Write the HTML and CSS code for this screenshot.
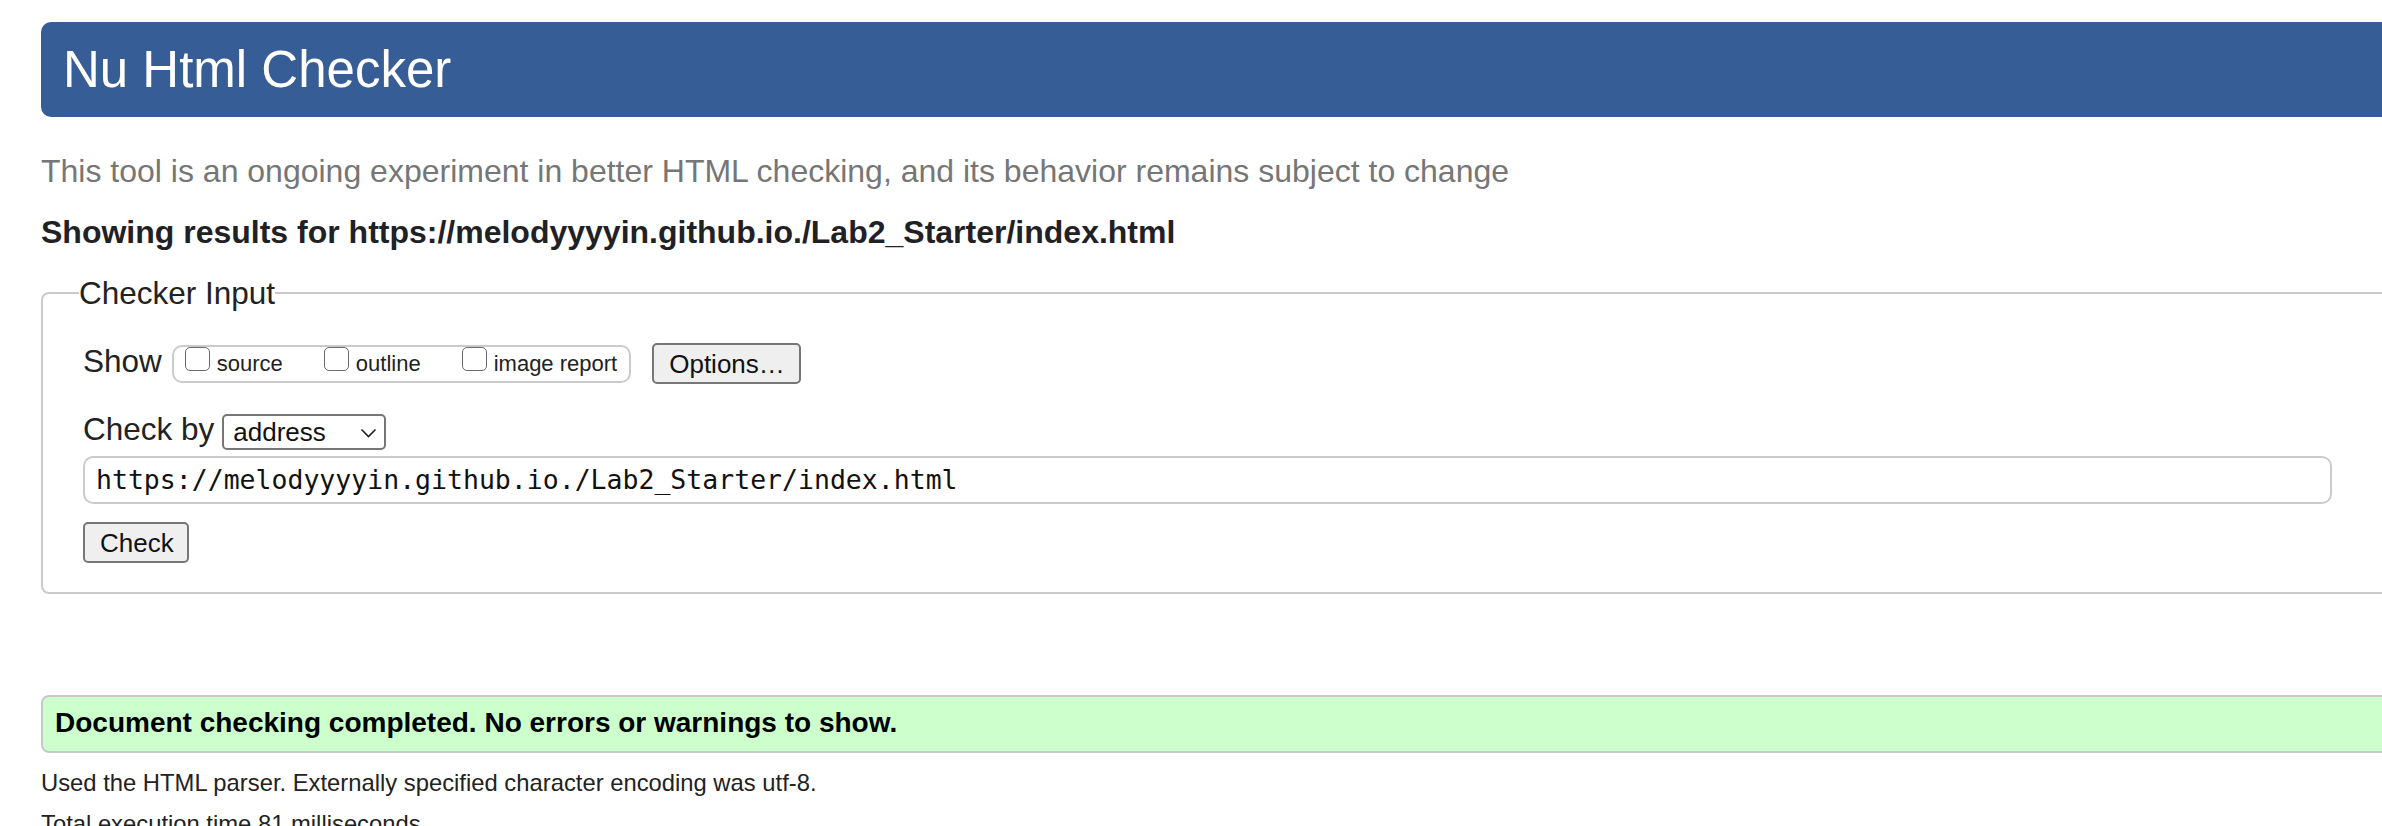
FILE: index.html
```html
<!DOCTYPE html>
<html lang="en">
<head>
<meta charset="utf-8">
<title>Nu Html Checker</title>
<link rel="stylesheet" href="styles.css">
</head>
<body>
<div class="page">
  <h1 class="title">Nu Html Checker</h1>
  <p class="lead">This tool is an ongoing experiment in better HTML checking, and its behavior remains subject to change</p>
  <p class="showing">Showing results for https://melodyyyyin.github.io./Lab2_Starter/index.html</p>
  <form class="checker">
    <fieldset class="input-set">
      <legend class="input-legend">Checker Input</legend>
      <div class="row show-row">
        <span class="row-label">Show</span>
        <div class="opts">
          <label class="opt"><input type="checkbox" class="cb"><span class="opt-text">source</span></label>
          <label class="opt"><input type="checkbox" class="cb"><span class="opt-text">outline</span></label>
          <label class="opt"><input type="checkbox" class="cb"><span class="opt-text">image report</span></label>
        </div>
        <button type="button" class="btn btn-options">Options…</button>
      </div>
      <div class="row by-row">
        <span class="row-label">Check by</span>
        <div class="select">
          <span class="select-text">address</span>
          <svg class="chev" width="17" height="10" viewBox="0 0 17 10"><path d="M1.5 1.5 L8.5 8.5 L15.5 1.5" fill="none" stroke="#222" stroke-width="1.6"/></svg>
        </div>
      </div>
      <div class="url">https://melodyyyyin.github.io./Lab2_Starter/index.html</div>
      <button type="button" class="btn btn-check">Check</button>
    </fieldset>
  </form>
  <div class="success">Document checking completed. No errors or warnings to show.</div>
  <p class="details first">Used the HTML parser. Externally specified character encoding was utf-8.</p>
  <p class="details">Total execution time 81 milliseconds.</p>
</div>
</body>
</html>
```

FILE: styles.css
```css
html, body {
  margin: 0;
  padding: 0;
  background: #ffffff;
}
body {
  overflow: hidden;
  font-family: "Liberation Sans", Arial, sans-serif;
  color: #222222;
}
.page {
  padding: 22px 0 0 41px;
  width: 2420px;
}
.title {
  margin: 0;
  padding: 19px 22px 18px 22px;
  font-size: 51px;
  line-height: 58px;
  font-weight: normal;
  color: #ffffff;
  background: #365d95;
  border-radius: 10px 0 0 10px;
}
.lead {
  margin: 36px 0 0 0;
  font-size: 32px;
  line-height: 36px;
  color: #767676;
}
.showing {
  margin: 25px 0 0 0;
  font-size: 32px;
  line-height: 36px;
  font-weight: bold;
  color: #1f2125;
}
.checker {
  margin: 26px 0 0 0;
}
.input-set {
  margin: 0;
  padding: 33px 40px 29px 40px;
  border: 2px solid #cbcbcb;
  border-radius: 8px;
  min-width: 0;
}
.input-legend {
  padding: 0;
  margin-left: -4px;
  font-size: 31.5px;
  line-height: 34px;
  color: #222222;
}
.row {
  display: flex;
  align-items: flex-start;
}
.row-label {
  font-size: 31.5px;
  line-height: 34px;
  color: #222222;
}
.show-row .row-label {
  margin-top: 1px;
}
.opts {
  display: flex;
  align-items: flex-start;
  gap: 41px;
  margin: 2px 0 0 10px;
  height: 34px;
  padding: 0 12px 0 11px;
  border: 2px solid #cbcbcb;
  border-radius: 10px;
}
.opt {
  display: flex;
  align-items: flex-start;
  gap: 7px;
}
.cb {
  appearance: none;
  -webkit-appearance: none;
  margin: 0;
  width: 25px;
  height: 24px;
  border: 1.5px solid #6b6b6b;
  border-radius: 5px;
  background: #ffffff;
}
.opt-text {
  font-size: 22px;
  line-height: 34px;
  color: #222222;
}
.btn {
  font-family: "Liberation Sans", Arial, sans-serif;
  font-size: 26px;
  line-height: 30px;
  color: #111111;
  background: #efefef;
  border: 2px solid #767676;
  border-radius: 5px;
  height: 41px;
  padding: 0 15px;
}
.btn-options {
  margin-left: 21px;
  width: 149px;
}
.by-row {
  margin-top: 28px;
}
.select {
  display: flex;
  align-items: center;
  justify-content: space-between;
  box-sizing: border-box;
  margin: 2px 0 0 8px;
  width: 164px;
  height: 36px;
  padding: 0 7px 0 9px;
  border: 2px solid #767676;
  border-radius: 5px;
  background: #ffffff;
}
.select-text {
  font-size: 26px;
  line-height: 30px;
  color: #111111;
}
.chev {
  display: block;
  margin-top: 1px;
}
.url {
  box-sizing: border-box;
  margin-top: 6px;
  width: 2249px;
  height: 48px;
  padding: 1px 11px 0 11px;
  border: 2px solid #cbcbcb;
  border-radius: 10px;
  font-family: "DejaVu Sans Mono", "Liberation Mono", monospace;
  font-size: 26.5px;
  line-height: 42px;
  color: #111111;
  white-space: nowrap;
}
.btn-check {
  display: block;
  margin-top: 18px;
  width: 106px;
}
.success {
  margin-top: 101px;
  padding: 10px 12px 12px 12px;
  font-size: 28px;
  line-height: 32px;
  font-weight: bold;
  color: #000000;
  background: #ccffcc;
  border: 2px solid #c8c8c8;
  border-radius: 8px;
}
.details {
  margin: 5px 0 0 0;
  font-size: 23.8px;
  line-height: 36px;
  color: #222222;
}
.details.first {
  margin-top: 12px;
}
```
